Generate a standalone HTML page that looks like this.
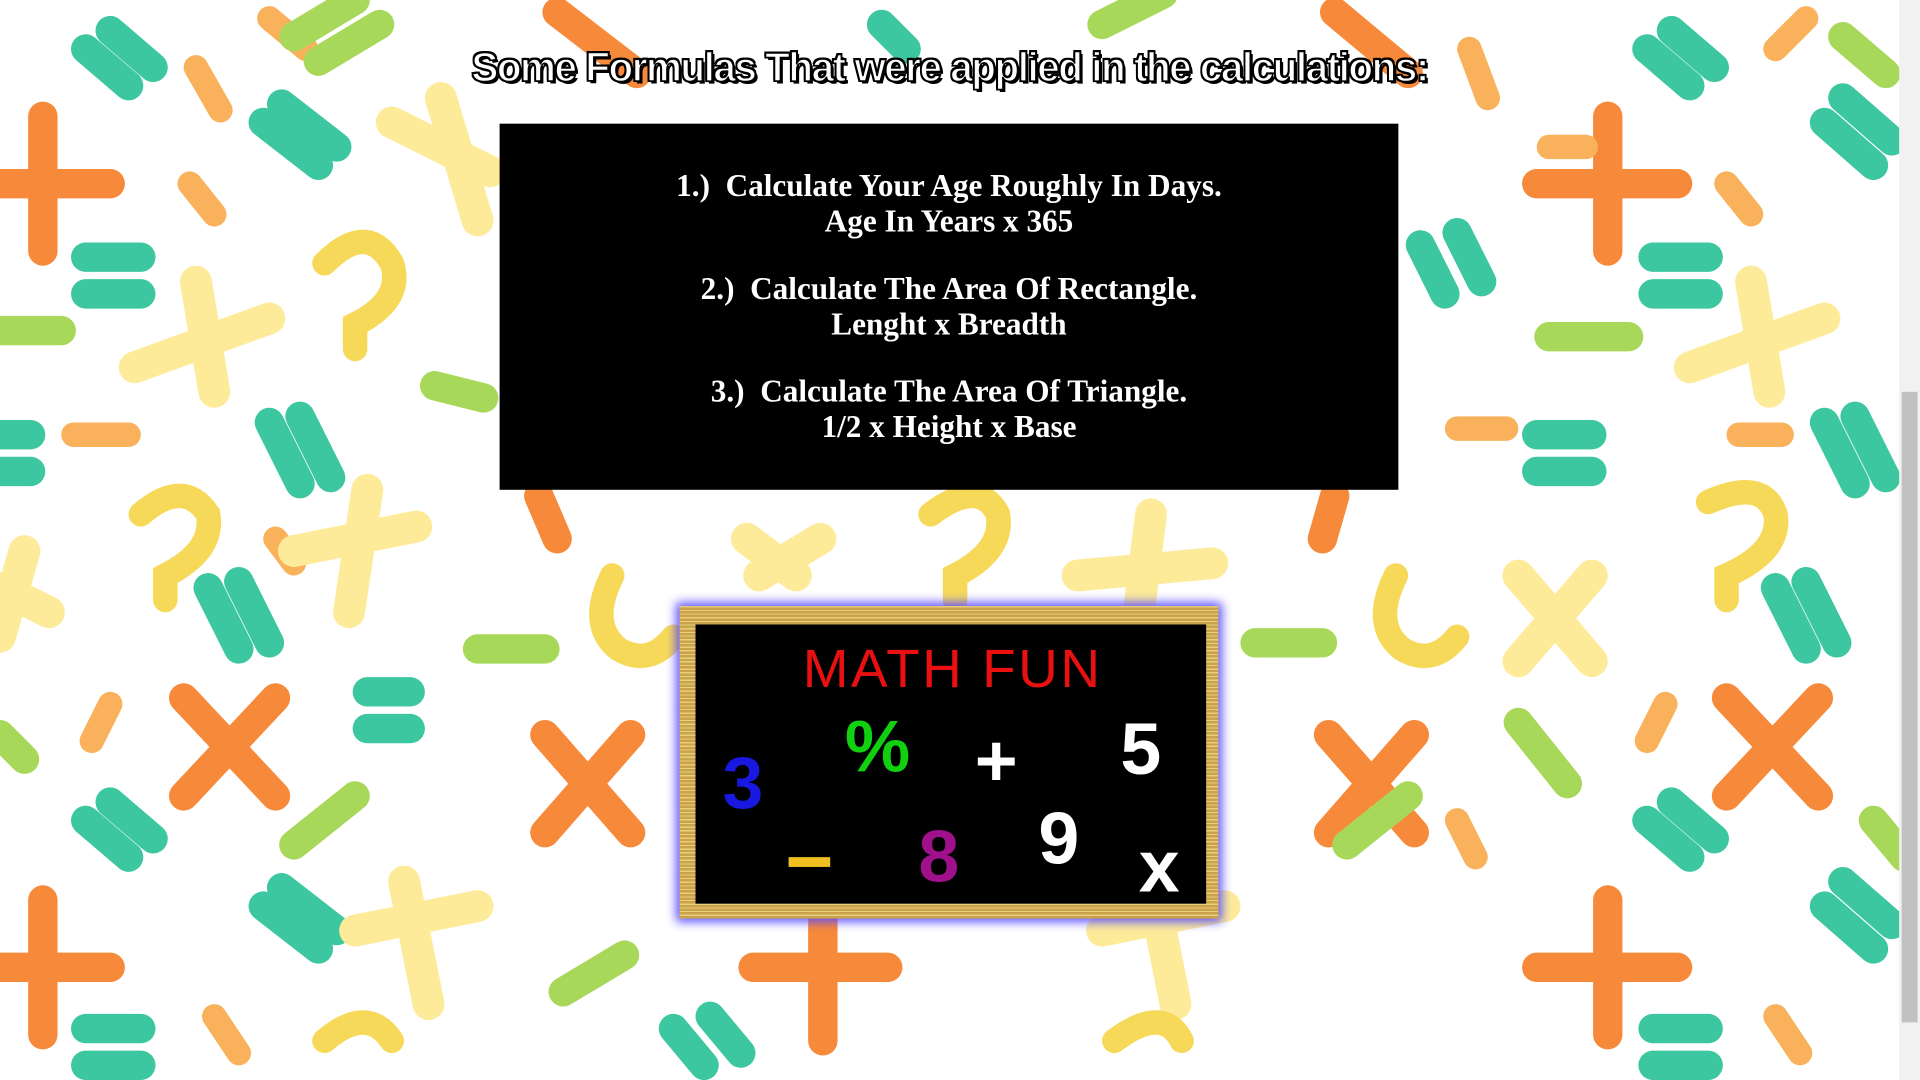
<!DOCTYPE html>
<html><head><meta charset="utf-8"><style>
html,body{margin:0;padding:0;width:1920px;height:1080px;overflow:hidden;background:#fff}
#w{position:absolute;left:0;top:0;width:1568px;height:882px;transform:scale(1.22449,1.22449);transform-origin:0 0}
#bg{position:absolute;left:0;top:0}
.t{position:absolute;left:0;width:1551px;top:36px;text-align:center;font:bold 33px "Liberation Sans",sans-serif;color:#fff;letter-spacing:-1.2px;-webkit-text-stroke:1.2px #000;text-shadow:2px 2px 0 #000,-1px -1px 0 #000,1px -1px 0 #000,-1px 1px 0 #000}
.box{position:absolute;left:408px;top:101px;width:734px;height:299px;background:#000;color:#fff;text-align:center;font:bold 25.5px "Liberation Serif",serif;line-height:29px}
.box p{margin:0}
.board{position:absolute;left:555px;top:495px;width:440px;height:255px;background:repeating-linear-gradient(0deg,#c9a24a 0 2px,#e8cf80 2px 3px),#d8b45a;box-shadow:0 0 8px 3px #5a4cff}
.inner{position:absolute;left:13px;top:15px;width:417px;height:228px;background:#000}
.s{position:absolute;font:bold 60px "Liberation Sans",sans-serif;line-height:1}
.sb{position:absolute;left:1551px;top:0;width:17px;height:882px;background:#f1f1f1}
.th{position:absolute;left:2px;top:320px;width:13px;height:515px;background:#c1c1c1}
</style></head><body><div id="w">
<svg id="bg" width="1568" height="882" viewBox="0 0 1568 882" fill="none" stroke-linecap="round" stroke-width="24">
<g stroke="#f7893a">
<path d="M35 95V205M0 150H90"/><path d="M1313 95V205M1255 150H1370"/><path d="M35 735V845M0 790H90"/><path d="M1313 735V845M1255 790H1370"/><path d="M672 740V850M615 790H725"/>
<path d="M150 570L225 650M225 570L150 650"/><path d="M445 600L515 680M515 600L445 680"/><path d="M1085 600L1155 680M1155 600L1085 680"/><path d="M1410 570L1485 650M1485 570L1410 650"/>
<path d="M455 10L520 60M1090 10L1150 60"/><path d="M440 405L455 440M1090 405L1080 440"/>
</g>
<g stroke="#f9b25b" stroke-width="20">
<path d="M160 55L180 90M1200 40L1215 80M1265 120H1295M60 355H105M1190 350H1230M1420 355H1455M90 575L75 605M1360 575L1345 605M1190 670L1205 700M225 440L240 460M990 130L1020 150M155 150L175 175M1410 150L1430 175M175 830L195 860M1450 830L1470 860M220 15L250 40M1475 15L1450 40"/>
</g>
<g stroke="#3cc7a0">
<path d="M70 40L105 70M90 25L125 55M1345 40L1380 70M1365 25L1400 55M215 100L260 135M230 85L275 120M1490 100L1530 135M1505 80L1545 115M70 210H115M70 240H115M1350 210H1395M1350 240H1395M220 345L245 395M245 340L270 390M1490 345L1515 395M1515 340L1540 390M0 355H25M0 385H25M1255 355H1300M1255 385H1300M170 480L195 530M195 475L220 525M1450 480L1475 530M1475 475L1500 525M300 565H335M300 595H335M70 670L105 700M90 655L125 685M1345 670L1380 700M1365 655L1400 685M215 740L260 775M230 725L275 760M1490 740L1530 775M1505 720L1545 755M70 840H115M70 870H115M1350 840H1395M1350 870H1395M550 840L575 870M580 830L605 860M1160 200L1180 240M1190 190L1210 230M720 20L740 40"/>
</g>
<g stroke="#a8d85a">
<path d="M240 30L290 0M260 50L310 20M900 20L950 -5M0 270H50M1265 275H1330M355 315L395 325M1505 30L1540 60M390 530H445M1025 525H1080M0 600L20 620M240 690L290 650M1100 690L1150 650M1240 590L1280 640M460 810L510 780M1530 670L1555 700"/>
</g>
<g stroke="#fdeb9a" stroke-width="26">
<path d="M360 80L390 180M320 100L400 140M160 230L175 320M110 300L220 260M300 400L285 500M240 450L340 430M0 480L40 500M20 450L0 520M610 440L650 470M620 470L670 440M940 420L930 500M880 470L990 460M1430 230L1445 320M1380 300L1490 260M1240 470L1300 540M1300 470L1240 540M330 720L350 820M290 760L390 740M940 720L960 820M900 760L1000 740"/>
</g>
<g stroke="#f7d95a" stroke-width="20">
<path d="M265 215Q300 180 320 215Q330 245 290 265V285M115 420Q150 390 170 420Q175 450 135 470V490M760 420Q800 390 815 420Q820 450 780 470V490M1395 410Q1440 390 1450 420Q1455 450 1410 470V490M500 470Q480 510 505 530Q530 545 550 520M1140 470Q1120 510 1145 530Q1170 545 1190 520M265 850Q300 820 320 850M910 850Q950 820 965 850"/>
</g>
</svg>
<div class="t">Some Formulas That were applied in the calculations:</div>
<div class="box"><div style="height:36px"></div>
<p>1.)&nbsp; Calculate Your Age Roughly In Days.</p><p>Age In Years x 365</p><div style="height:26px"></div>
<p>2.)&nbsp; Calculate The Area Of Rectangle.</p><p>Lenght x Breadth</p><div style="height:26px"></div>
<p>3.)&nbsp; Calculate The Area Of Triangle.</p><p>1/2 x Height x Base</p></div>
<div class="board"><div class="inner">
<div style="position:absolute;left:0;width:420px;top:12px;text-align:center;color:#e81010;font:44px 'Liberation Sans',sans-serif;letter-spacing:2px;transform:scaleX(1.02)">MATH FUN</div>
<div class="s" style="left:22px;top:100px;color:#1818e0">3</div>
<div class="s" style="left:122px;top:70px;color:#10d010">%</div>
<div class="s" style="left:228px;top:82px;color:#fff">+</div>
<div class="s" style="left:347px;top:72px;color:#fff">5</div>
<div style="position:absolute;left:76px;top:190px;width:34px;height:8px;background:#f0c020"></div>
<div class="s" style="left:182px;top:160px;color:#a0108a">8</div>
<div class="s" style="left:280px;top:145px;color:#fff">9</div>
<div class="s" style="left:362px;top:168px;color:#fff">x</div>
</div></div>
<div class="sb"><div class="th"></div></div>
</div></body></html>
